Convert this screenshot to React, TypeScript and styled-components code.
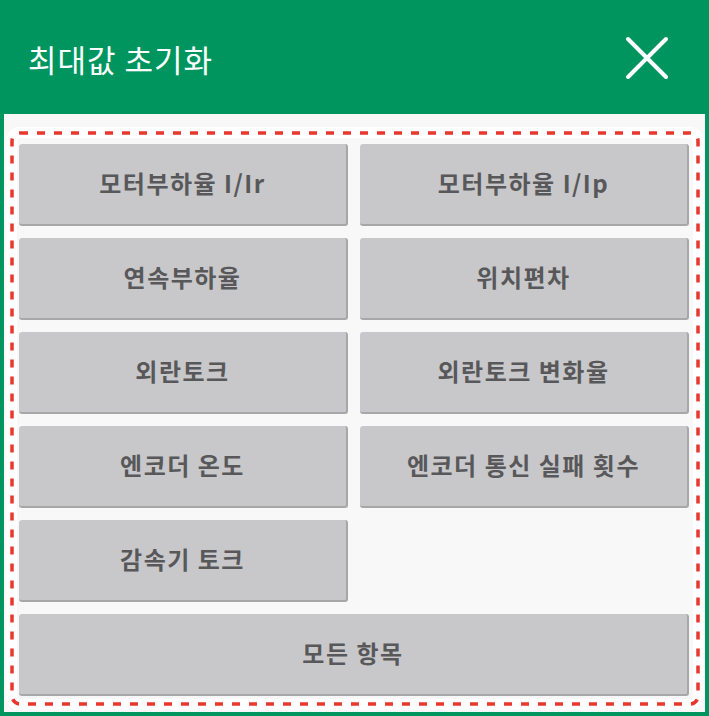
import React from "react";
import styled, { createGlobalStyle } from "styled-components";

const Global = createGlobalStyle`
  html, body { margin: 0; padding: 0; background: #00955f; }
  #root { width: 709px; height: 716px; }
  * { box-sizing: border-box; }
`;

const Screen = styled.div`
  width: 709px;
  height: 716px;
  background: #00955f;
  display: flex;
  flex-direction: column;
  padding: 0 4px 4px 4px;
  font-family: "Noto Sans CJK KR", "Noto Sans", sans-serif;
`;

const Header = styled.div`
  height: 114px;
  flex: none;
  display: flex;
  align-items: center;
  justify-content: space-between;
  padding: 2px 36px 0 24px;
`;

const Title = styled.h1`
  margin: 0;
  color: #ffffff;
  font-size: 31px;
  font-weight: 400;
  letter-spacing: 1px;
  line-height: 1;
`;

const CloseButton = styled.button`
  width: 44px;
  height: 44px;
  padding: 0;
  border: none;
  background: transparent;
  display: flex;
  align-items: center;
  justify-content: center;
  cursor: pointer;
`;

const Panel = styled.div`
  flex: 1;
  background: #f8f8f8;
  display: flex;
  padding: 17px 5px 6px 6px;
`;

const FocusBox = styled.div`
  position: relative;
  flex: 1;
  border-radius: 10px;
  background: #f8f8f8;
  box-shadow: 0 0 0 4px #ffffff, inset 0 0 0 7px #ffffff;
  padding: 13px 11px 10px 9px;
  display: grid;
  grid-template-columns: 1fr 1fr;
  grid-auto-rows: 82px;
  column-gap: 12px;
  row-gap: 12px;
`;

const Ring = styled.svg`
  position: absolute;
  inset: 0;
  width: 100%;
  height: 100%;
  pointer-events: none;
  overflow: visible;
`;

const ItemButton = styled.button<{ $wide?: boolean }>`
  grid-column: ${(p) => (p.$wide ? "1 / span 2" : "auto")};
  background: #c8c8ca;
  border: none;
  border-right: 2px solid #a7a7a8;
  border-bottom: 2px solid #a7a7a8;
  border-radius: 3px;
  color: #58585a;
  font-family: "Noto Sans CJK KR", "Noto Sans", sans-serif;
  font-size: 24px;
  font-weight: 700;
  letter-spacing: 1.5px;
  padding: 0 0 4px 0;
  display: flex;
  align-items: center;
  justify-content: center;
  cursor: pointer;
`;

const Spacer = styled.div``;

const items: (string | null)[] = [
  "모터부하율 I/Ir",
  "모터부하율 I/Ip",
  "연속부하율",
  "위치편차",
  "외란토크",
  "외란토크 변화율",
  "엔코더 온도",
  "엔코더 통신 실패 횟수",
  "감속기 토크",
  null,
];

export default function App() {
  return (
    <>
      <Global />
      <Screen>
        <Header>
          <Title>최대값 초기화</Title>
          <CloseButton aria-label="닫기">
            <svg width="44" height="44" viewBox="0 0 44 44">
              <path d="M3 3 L41 41 M41 3 L3 41" stroke="#ffffff" strokeWidth="4" strokeLinecap="round" />
            </svg>
          </CloseButton>
        </Header>
        <Panel>
          <FocusBox>
            <Ring aria-hidden="true">
              <rect
                x="2"
                y="2"
                rx="8"
                ry="8"
                style={{ width: "calc(100% - 4px)", height: "calc(100% - 4px)" }}
                fill="none"
                stroke="#e8372c"
                strokeWidth="3.5"
                strokeDasharray="8 9"
              />
            </Ring>
            {items.map((t, i) => (t ? <ItemButton key={i}>{t}</ItemButton> : <Spacer key={i} />))}
            <ItemButton $wide>모든 항목</ItemButton>
          </FocusBox>
        </Panel>
      </Screen>
    </>
  );
}
